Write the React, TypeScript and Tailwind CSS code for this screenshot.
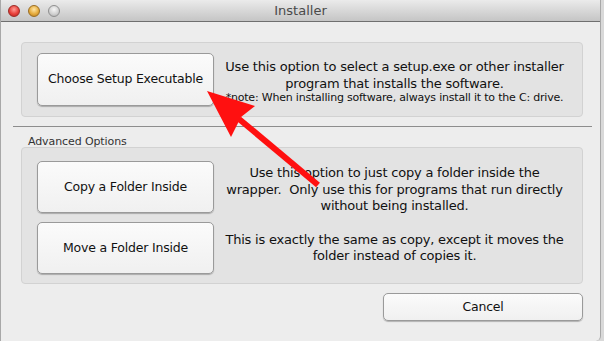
import React from "react"

const font = { fontFamily: '"DejaVu Sans", "Lucida Grande", sans-serif' }

function MacButton({ label, className }: { label: string; className: string }) {
  return (
    <button
      className={
        "flex items-center justify-center rounded-[5px] border border-[#9a9a9a] bg-gradient-to-b from-[#fbfbfb] to-[#f0f0f0] text-[12.5px] tracking-[-0.2px] text-[#111] shadow-[0_1px_1px_rgba(0,0,0,0.25)] " +
        className
      }
    >
      {label}
    </button>
  )
}

function TrafficLight({ color }: { color: "red" | "yellow" | "gray" }) {
  const cls =
    color === "red"
      ? "bg-[radial-gradient(circle_at_50%_35%,#ff9d96_0%,#e8413b_55%,#b8241f_100%)] border-[#9c2a25]"
      : color === "yellow"
      ? "bg-[radial-gradient(circle_at_50%_35%,#ffe6a6_0%,#e6ac3d_55%,#b57a1c_100%)] border-[#9a6d22]"
      : "bg-[radial-gradient(circle_at_50%_35%,#f6f6f6_0%,#d2d2d2_55%,#a9a9a9_100%)] border-[#8f8f8f]"
  return <div className={"h-[12px] w-[12px] rounded-full border " + cls} />
}

export default function App() {
  return (
    <div className="relative h-[341px] w-[604px] overflow-hidden bg-[#d9d9d9]" style={font}>
      <div className="flex h-[341px] w-[601px] flex-col overflow-hidden rounded-br-[5px] border-l border-r border-[#a8a8a8] bg-[#ededed]">
        {/* Title bar */}
        <div className="relative flex h-[22px] shrink-0 items-center border-b border-[#6f6f6f] bg-gradient-to-b from-[#ebebeb] to-[#c5c5c5]">
          <div className="flex items-center gap-[8px] pl-[7px]">
            <TrafficLight color="red" />
            <TrafficLight color="yellow" />
            <TrafficLight color="gray" />
          </div>
          <div className="absolute inset-0 flex items-center justify-center text-[13px] text-[#4a4a4a]">
            Installer
          </div>
        </div>

        {/* Content */}
        <div className="flex flex-col pl-[20px] pr-[17px] pt-[20px]">
          <div className="flex items-center rounded-[4px] border border-[#d2d2d2] bg-[#e3e3e3] py-[10px] pl-[15px] pr-[15px]">
            <MacButton label="Choose Setup Executable" className="h-[53px] w-[177px] shrink-0" />
            <div className="ml-[8px] mt-[2px] flex-1 text-center text-[#111]">
              <div className="text-[13px] leading-[17px] tracking-[-0.2px]">
                Use this option to select a setup.exe or other installer
                <br />
                program that installs the software.
              </div>
              <div className="text-[11px] leading-[11px] tracking-[-0.2px]">
                *note: When installing software, always install it to the C: drive.
              </div>
            </div>
          </div>
        </div>

        <div className="ml-[12px] mr-[8px] mt-[9px] h-px bg-[#8d8d8d]" />

        <div className="flex flex-col pl-[20px] pr-[17px]">
          <div className="pl-[7px] pt-[8px] text-[11px] leading-[14px] tracking-[-0.1px] text-[#333]">
            Advanced Options
          </div>
          <div className="-mt-[2px] flex flex-col gap-[9px] rounded-[4px] border border-[#d2d2d2] bg-[#e3e3e3] pb-[9px] pl-[15px] pr-[15px] pt-[13px]">
            <div className="flex items-center">
              <MacButton label="Copy a Folder Inside" className="h-[52px] w-[177px] shrink-0" />
              <div className="-mb-[3px] ml-[8px] mt-[3px] flex-1 text-center text-[13px] leading-[16.5px] tracking-[-0.2px] text-[#111]">
                Use this option to just copy a folder inside the
                <br />
                wrapper.&nbsp; Only use this for programs that run directly
                <br />
                without being installed.
              </div>
            </div>
            <div className="flex items-center">
              <MacButton label="Move a Folder Inside" className="h-[52px] w-[177px] shrink-0" />
              <div className="ml-[8px] flex-1 text-center text-[13px] leading-[16.5px] tracking-[-0.2px] text-[#111]">
                This is exactly the same as copy, except it moves the
                <br />
                folder instead of copies it.
              </div>
            </div>
          </div>

          <div className="mt-[9px] flex justify-end">
            <MacButton label="Cancel" className="h-[28px] w-[200px]" />
          </div>
        </div>
      </div>

      {/* Red annotation arrow */}
      <svg className="pointer-events-none absolute left-0 top-0" width="604" height="341" viewBox="0 0 604 341">
        <line x1="239" y1="119" x2="318" y2="185" stroke="#ff1010" strokeWidth="6" />
        <polygon points="207,91 255,106 241,117 231,137" fill="#ff1010" />
      </svg>
    </div>
  )
}
